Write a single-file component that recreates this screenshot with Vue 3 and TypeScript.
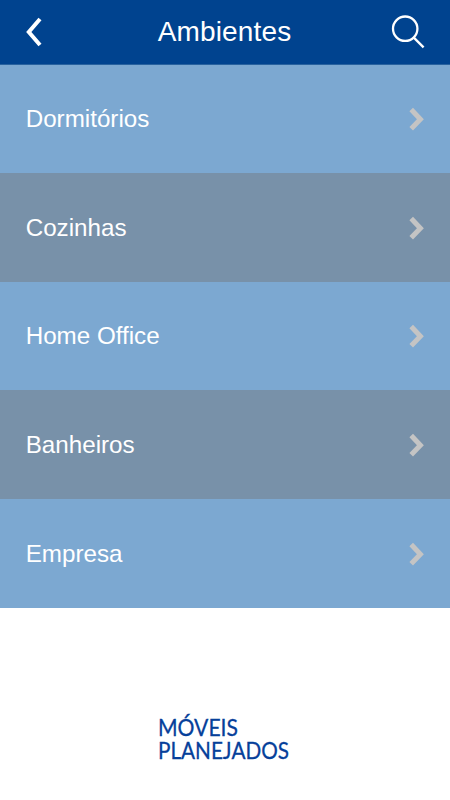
<script setup lang="ts">
const items: string[] = ['Dormitórios', 'Cozinhas', 'Home Office', 'Banheiros', 'Empresa']
</script>

<template>
  <div class="screen">
    <header class="bar">
      <svg class="back" width="18" height="32" viewBox="0 0 18 32"><path d="M16 3 L4.8 16 L16 29" /></svg>
      <h1>Ambientes</h1>
      <svg class="search" width="34" height="34" viewBox="0 0 34 34"><circle cx="14.2" cy="13.7" r="12.2" /><path d="M22.8 22.6 L32.6 32.4" /></svg>
    </header>
    <nav class="list">
      <a v-for="item in items" :key="item" class="row">
        <span>{{ item }}</span>
        <svg width="16" height="24" viewBox="0 0 16 24"><path d="M2.2 2.6 L11.4 12.2 L2.2 21.8" /></svg>
      </a>
    </nav>
    <footer class="brand">
      <svg width="134" height="24" viewBox="0 0 134 24">
        <text x="0" y="18.5" textLength="80" lengthAdjust="spacingAndGlyphs">MÓVEIS</text>
      </svg>
      <svg width="134" height="24" viewBox="0 0 134 24">
        <text x="0" y="18.3" textLength="131" lengthAdjust="spacingAndGlyphs">PLANEJADOS</text>
      </svg>
    </footer>
  </div>
</template>

<style>
body { background: #fff; }
</style>
<style scoped>
.screen { width: 450px; height: 800px; display: flex; flex-direction: column; font-family: "Liberation Sans", Arial, sans-serif; color: #fff; background: #fff; overflow: hidden; }
.bar { height: 65px; box-sizing: border-box; background: #00438f; border-bottom: 1px solid #28629f; display: grid; grid-template-columns: 34px 1fr 34px; align-items: center; padding: 0 25px 1px 24px; }
.bar svg { fill: none; stroke: #fff; }
.back { stroke-width: 4; }
.search { stroke-width: 2.3; }
h1 { margin: 0; font-size: 28px; font-weight: 400; line-height: 32px; letter-spacing: 0.15px; text-align: center; }
.list { display: grid; grid-template-rows: 108px 109px 108px 109px 109px; }
.row { display: flex; align-items: center; justify-content: space-between; padding: 0 25px 0 25.7px; background: #7ca8d1; font-size: 24.2px; font-variant-ligatures: none; }
.row:nth-child(even) { background: #7891a9; }
.row svg { fill: none; stroke: #c4c4c4; stroke-width: 5; }
.brand { padding: 109px 0 0 158px; }
.brand svg { display: block; overflow: visible; }
.brand text { font-family: Lato, sans-serif; font-size: 24px; fill: #06409a; stroke: #06409a; stroke-width: 0.3px; }
</style>
